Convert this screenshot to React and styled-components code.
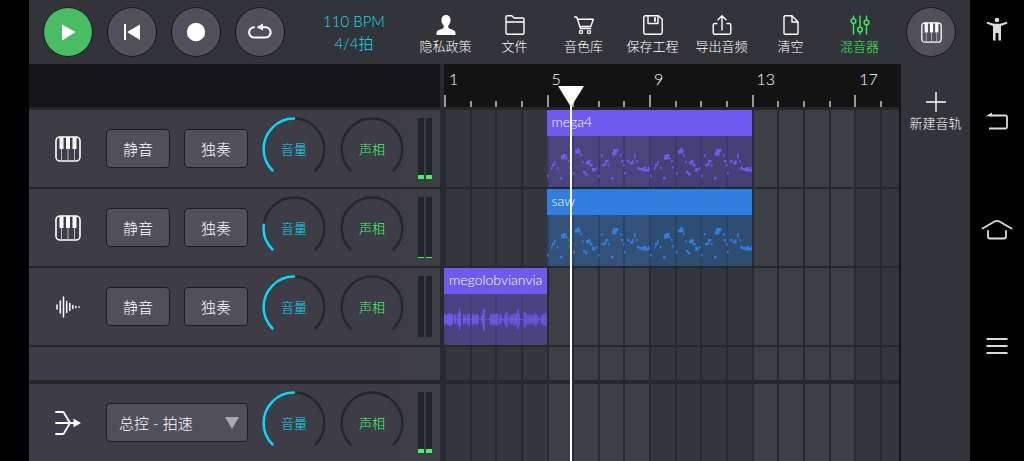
import React from "react";
import styled, { createGlobalStyle } from "styled-components";

const Global = createGlobalStyle`
  * { box-sizing: border-box; }
  body { margin: 0; background: #000; overflow: hidden; }
  button, select, input { font: inherit; color: inherit; }
  svg { display: block; }
`;

const Screen = styled.div`
  display: flex;
  height: 100vh;
  padding-left: 29px;
  background: #000;
  color: #fff;
  font-family: "Century Gothic", Lato, "Noto Sans CJK SC", sans-serif;
  font-weight: 300;
  user-select: none;
`;

const Studio = styled.main`
  flex: 1;
  min-width: 0;
  display: flex;
  flex-direction: column;
  background: #333439;
`;

const Toolbar = styled.header`
  display: flex;
  align-items: center;
  height: 64px;
  flex: none;
  padding: 0 14px;
`;

const Transport = styled.div`
  display: flex;
  gap: 14px;
`;

const RoundButton = styled.button`
  width: 50px;
  height: 50px;
  padding: 0;
  display: grid;
  place-items: center;
  border: 1px solid #17181b;
  border-radius: 50%;
  background: ${(p) => (p.$active ? "#48bd63" : "#504f5a")};
  color: #fff;
`;

const Tempo = styled.div`
  flex: 1;
  padding-left: 12px;
  text-align: center;
  font-size: 15px;
  line-height: 22px;
  color: #12dcf2;
  white-space: nowrap;
`;

const Menu = styled.nav`
  display: flex;
`;

const MenuButton = styled.button`
  width: 69px;
  padding: 5px 0 0;
  border: 0;
  background: none;
  display: flex;
  flex-direction: column;
  align-items: center;
  gap: 3px;
  font-size: 13px;
  line-height: 16px;
  white-space: nowrap;
  color: ${(p) => (p.$active ? "#34f060" : "#fff")};
`;

const InstrumentSlot = styled.div`
  padding-left: 12px;
`;

const Workspace = styled.div`
  flex: 1;
  min-height: 0;
  display: flex;
`;

const Mixer = styled.section`
  width: 411px;
  flex: none;
  display: flex;
  flex-direction: column;
  background: linear-gradient(to right, #3e3d47 90%, #3b3f45);
`;

const MixerHead = styled.div`
  height: 46px;
  flex: none;
  background: #151517;
  border-bottom: 3px solid #25262a;
`;

const TrackRow = styled.div`
  height: 79px;
  flex: none;
  padding: 0 8px 0 26px;
  border-bottom: 2px solid #25262a;
  display: grid;
  grid-template-columns: 37px repeat(4, 64px) 14px;
  column-gap: 14px;
  align-items: center;
`;

const SpacerRow = styled.div`
  height: 37px;
  flex: none;
  border-bottom: 4px solid #25262a;
`;

const TrackButton = styled.button`
  height: 39px;
  padding: 0;
  border: 1px solid #1b1b1f;
  border-radius: 4px;
  background: #504f5a;
  font-size: 15px;
`;

const SelectBox = styled.label`
  grid-column: 2 / 4;
  position: relative;
  color: #a9a9ae;
`;

const TrackSelect = styled.select`
  appearance: none;
  width: 100%;
  height: 39px;
  padding: 0 12px;
  border: 1px solid #1b1b1f;
  border-radius: 4px;
  background: #504f5a;
  font-size: 15px;
  color: #fff;
`;

const SelectArrow = styled.span`
  position: absolute;
  right: 9px;
  top: 14px;
  border: 7px solid transparent;
  border-top: 12px solid #a9a9ae;
  border-bottom: 0;
  pointer-events: none;
`;

const DialLabel = styled.label`
  display: grid;
  place-items: center;
  font-size: 13px;
  color: ${(p) => p.$color};
  > * { grid-area: 1 / 1; }
`;

const DialInput = styled.input`
  width: 100%;
  height: 100%;
  margin: 0;
  opacity: 0;
`;

const Meters = styled.div`
  display: flex;
  gap: 2px;
  height: 61px;
`;

const Meter = styled.div`
  flex: 1;
  display: flex;
  flex-direction: column;
  justify-content: flex-end;
  background: #22252a;
`;

const MeterLevel = styled.div`
  height: ${(p) => p.$level}px;
  background: #43f564;
`;

const Timeline = styled.section`
  flex: 1;
  min-width: 0;
  position: relative;
  display: flex;
  flex-direction: column;
  border-left: 4px solid #272b30;
  border-right: 2px solid #141416;
  background: #272a2e;
`;

const beatGrid = `
  display: grid;
  grid-template-columns: repeat(17, 4fr) 3fr;
`;

const Ruler = styled.div`
  ${beatGrid}
  height: 46px;
  flex: none;
  background: #131313;
  border-bottom: 3px solid #25262a;
`;

const RulerMark = styled.div`
  min-width: 0;
  display: flex;
  flex-direction: column;
  justify-content: space-between;
  font-size: 16px;
  line-height: 18px;
  padding-top: 6px;
  white-space: nowrap;
`;

const MarkLabel = styled.span`
  height: 18px;
  padding-left: 5px;
`;

const Tick = styled.span`
  width: 2px;
  height: ${(p) => (p.$major ? 12 : 6)}px;
  background: #989898;
`;

const Lane = styled.div`
  ${beatGrid}
  height: ${(p) => p.$height}px;
  flex: none;
  border-bottom: ${(p) => p.$gap}px solid #25282c;
`;

const Cell = styled.div`
  grid-row: 1;
  grid-column: ${(p) => p.$n};
  min-width: 0;
  border-left: 2px solid #272b2f;
  background: ${(p) => (p.$light ? "#3c3f46" : "#33373b")};
`;

const Clip = styled.div`
  grid-row: 1;
  grid-column: ${(p) => p.$from} / ${(p) => p.$to};
  min-width: 0;
  z-index: 1;
  display: flex;
  flex-direction: column;
  background: ${(p) => p.$tint};
`;

const ClipTitle = styled.div`
  height: 26px;
  flex: none;
  padding-left: 5px;
  overflow: hidden;
  white-space: nowrap;
  font-size: 14px;
  line-height: 24px;
  color: #fff;
  background: ${(p) => p.$color};
`;

const ClipArt = styled.svg`
  width: 100%;
  flex: 1;
  min-height: 0;
  fill: ${(p) => p.$color};
`;

const Playhead = styled.div`
  position: absolute;
  top: 22px;
  bottom: 0;
  width: 26px;
  margin-left: -13px;
  display: flex;
  flex-direction: column;
  align-items: center;
  z-index: 2;
  pointer-events: none;
`;

const PlayheadTip = styled.div`
  border: 13px solid transparent;
  border-top: 21px solid #fff;
  border-bottom: 0;
`;

const PlayheadLine = styled.div`
  flex: 1;
  width: 2px;
  margin-top: -2px;
  background: #fff;
`;

const SidePanel = styled.aside`
  width: 69px;
  flex: none;
  padding-top: 23px;
`;

const SystemNav = styled.nav`
  width: 54px;
  flex: none;
  display: grid;
  grid-template-rows: 58fr 128fr 88fr 144fr 43fr;
  background: #000;
`;

const SystemButton = styled.button`
  padding: 0;
  border: 0;
  background: none;
  color: #dcdcdc;
  display: grid;
  place-items: center;
`;

function Icon({ size = 20, sw = 1.4, children }) {
  return (
    <svg width={size} height={size} viewBox={`0 0 ${size} ${size}`} fill="none" stroke="currentColor"
      strokeWidth={sw} strokeLinejoin="round" strokeLinecap="round" aria-hidden="true">
      {children}
    </svg>
  );
}

const solid = { fill: "currentColor", stroke: "none" };

function PianoIcon({ size = 26 }) {
  return (
    <svg width={size} height={size} viewBox="0 0 26 26" aria-hidden="true">
      <rect x="1" y="1" width="24" height="24" rx="4" fill="none" stroke="#fff" strokeWidth="1.6" />
      <path d="M4.500 1h4v12h-4zM11 1h4v12h-4zM17.500 1h4v12h-4z" fill="#fff" />
      <path d="M6.500 13v12M13 13v12M19.500 13v12" stroke="#b9b9be" strokeWidth="1" />
    </svg>
  );
}

function WaveIcon() {
  return (
    <Icon size={26} sw={1.5}>
      <path d="M2 11v4M5.300 7v12M8.500 3v20M11.700 7.500v11M14.800 9.500v7M17.800 11.500v3M20.800 12.500v1M24 12.800v.4" />
    </Icon>
  );
}

function MergeIcon() {
  return (
    <Icon size={26} sw={1.9}>
      <path d="M1 2h7.500L15 13 8.500 24H1M1 13h18" />
      <path d="M18.500 8.800 26 13l-7.500 4.200z" {...solid} />
    </Icon>
  );
}

const MENU = [
  ["隐私政策", <path key="a" {...solid} d="M10 0c3 0 4.600 2.100 4.600 5 0 2.400-1 4.300-2.300 5.400v1.700c0 1 .7 1.400 2 1.900 3.300 1.200 5.200 1.800 5.200 4v2H.500v-2c0-2.200 1.900-2.800 5.200-4 1.300-.5 2-.9 2-1.900v-1.700C6.400 9.300 5.400 7.400 5.400 5 5.400 2.100 7 0 10 0z" />],
  ["文件", <path key="a" d="M1 3V2a1.300 1.300 0 0 1 1.300-1.300h4.500L9 3h8.700A1.300 1.300 0 0 1 19 4.300v13.400a1.500 1.500 0 0 1-1.500 1.500h-15A1.500 1.500 0 0 1 1 17.700zM1 7h18" />],
  ["音色库", <g key="a"><path d="M.500 2h2.200l3.800 11.500h10.200M3.500 4.200h15.800l-2.500 7.300H6" /><circle cx="7" cy="17" r="1.600" /><circle cx="15" cy="17" r="1.600" /></g>],
  ["保存工程", <g key="a"><path d="M2.500.800h13l3.700 3.400v13.300a1.700 1.700 0 0 1-1.700 1.700h-15a1.700 1.700 0 0 1-1.700-1.700v-15A1.700 1.700 0 0 1 2.500.800z" /><path d="M5 1v7.500h10V1" /><path d="M12 3v3" strokeWidth="1.800" /></g>],
  ["导出音频", <path key="a" d="M10 15V1M6 4.800 10 .800l4 4M5 8.500H2.700a1.500 1.500 0 0 0-1.500 1.500v7.700a1.500 1.500 0 0 0 1.500 1.500h14.600a1.500 1.500 0 0 0 1.500-1.500V10a1.500 1.500 0 0 0-1.500-1.500H15" />],
  ["清空", <path key="a" d="M3 2a1.200 1.200 0 0 1 1.200-1.200H11L17 7v11a1.200 1.200 0 0 1-1.200 1.200H4.200A1.200 1.200 0 0 1 3 18zM11 .800V7h6" />],
  ["混音器", <g key="a"><circle cx="3.500" cy="6" r="2.400" /><circle cx="10" cy="14.500" r="2.400" /><circle cx="16.500" cy="7.500" r="2.400" /><path d="M3.500 1v2.600M3.500 8.400V19M10 1v11M10 17v2M16.500 1v4M16.500 10v9" /></g>],
];

const TRACKS = [
  { icon: <PianoIcon />, volume: 50, level: 4 },
  { icon: <PianoIcon />, volume: 19, level: 1 },
  { icon: <WaveIcon />, volume: 50, level: 0 },
];

const NOTES = [
  [0, 39], [4, 31], [5, 28, 2], [7, 25, 1, 3], [10, 31], [13, 41, 2], [14, 19, 4, 4], [16, 18, 3, 2], [19, 21], [21, 24], [22, 30],
  [26, 36], [28, 14, 5, 3], [30, 12, 2, 2], [33, 18], [35, 25], [39, 25, 4, 3], [41, 24, 2, 2], [43, 28, 2], [36, 35, 2], [38, 37, 2], [45, 32, 3, 3], [49, 31], [51, 39],
  [54, 18], [55, 28, 2], [57, 27, 2], [58, 24, 3, 2], [61, 28], [64, 41, 2], [65, 16, 4, 3], [66, 13, 4, 3], [70, 13], [73, 18], [74, 24, 2], [76, 28], [77, 36],
  [80, 24, 2], [83, 26, 3], [85, 24], [87, 18, 1, 4], [89, 24], [90, 31, 2], [92, 32, 4], [95, 33, 7], [96, 31, 3], [101, 31, 1, 3],
];

const WAVE = [
  5, 6, 4, 5, 6, 6, 5, 6, 5, 1, 5, 4, 1, 5, 6, 11, 7, 1, 1, 5, 4, 5, 1, 5, 5, 6,
  1, 1, 5, 6, 4, 5, 5, 5, 4, 1, 1, 3, 5, 10, 11, 1, 1, 1, 1, 1, 5, 6, 4, 6, 6, 5, 6, 6,
  1, 5, 5, 4, 1, 1, 4, 6, 8, 7, 1, 3, 4, 5, 5, 3, 6, 5, 6, 9, 10, 6, 1, 1, 1, 1, 8, 7,
  6, 4, 5, 3, 5, 5, 3, 5, 4, 7, 6, 4, 3, 1, 1, 4, 5, 5, 6, 6, 7,
];

function Notes({ color }) {
  return (
    <ClipArt $color={color} viewBox="0 0 205 51" preserveAspectRatio="none" aria-hidden="true">
      {[0, 103].flatMap((shift) =>
        NOTES.map(([x, y, w = 1, h = 2], i) => (
          <rect key={`${shift}-${i}`} x={x + shift} y={y} width={w + 0.5} height={h + 0.5} />
        ))
      )}
    </ClipArt>
  );
}

function Wave({ color }) {
  return (
    <ClipArt $color={color} viewBox="0 0 103 51" preserveAspectRatio="none" aria-hidden="true">
      <rect x="0" y="25" width="103" height="1" opacity="0.7" />
      {WAVE.map((a, i) => (a > 1 ? <rect key={i} x={i} y={25.5 - a} width="1" height={a * 2} /> : null))}
    </ClipArt>
  );
}

const ARC = "M10.500 53.500A30.400 30.400 0 1 1 53.500 53.500";

function Dial({ label, color, value, filled }) {
  return (
    <DialLabel $color={color}>
      <svg width="64" height="64" viewBox="0 0 64 64" fill="none" strokeWidth="2.500" strokeLinecap="round" aria-hidden="true">
        <path d={ARC} stroke="#26272b" />
        {filled && <path d={ARC} stroke="#06dcf8" pathLength="100" strokeDasharray={`${value} 200`} />}
      </svg>
      <span>{label}</span>
      <DialInput type="range" min="0" max="100" defaultValue={value} />
    </DialLabel>
  );
}

function Controls({ volume, level }) {
  return (
    <>
      <Dial label="音量" color="#0cd8f0" value={volume} filled />
      <Dial label="声相" color="#3cfa62" value={50} />
      <Meters>
        <Meter><MeterLevel $level={level} /></Meter>
        <Meter><MeterLevel $level={level} /></Meter>
      </Meters>
    </>
  );
}

const BARS = Array.from({ length: 18 }, (_, i) => i);

function TimelineLane({ height = 79, gap = 2, children }) {
  return (
    <Lane $height={height} $gap={gap}>
      {BARS.map((i) => (
        <Cell key={i} $n={i + 1} $light={Math.floor(i / 4) % 2 === 1} />
      ))}
      {children}
    </Lane>
  );
}

export default function App() {
  const playhead = 127 / 455;
  return (
    <Screen>
      <Global />
      <Studio>
        <Toolbar>
          <Transport>
            <RoundButton $active aria-label="播放">
              <Icon size={20}><path {...solid} d="M4 2.500 17.500 10 4 18.500z" /></Icon>
            </RoundButton>
            <RoundButton aria-label="回到开头">
              <Icon size={20}><path {...solid} d="M2 2h2v16H2zM18 2.500v15.500L5 10z" /></Icon>
            </RoundButton>
            <RoundButton aria-label="录音">
              <Icon size={20}><circle {...solid} cx="10" cy="10" r="9.200" /></Icon>
            </RoundButton>
            <RoundButton aria-label="循环">
              <Icon size={24} sw={2}>
                <path d="M6 7.200A5 5 0 0 0 6.500 17.500h11a5 5 0 0 0 0-10.300H13" />
                <path {...solid} d="M8.500 7.200 15 3.500v7z" />
              </Icon>
            </RoundButton>
          </Transport>
          <Tempo>
            110 BPM
            <br />
            4/4拍
          </Tempo>
          <Menu>
            {MENU.map(([label, art], i) => (
              <MenuButton key={label} $active={i === 6}>
                <Icon>{art}</Icon>
                {label}
              </MenuButton>
            ))}
          </Menu>
          <InstrumentSlot>
            <RoundButton aria-label="乐器"><PianoIcon size={21} /></RoundButton>
          </InstrumentSlot>
        </Toolbar>
        <Workspace>
          <Mixer>
            <MixerHead />
            {TRACKS.map((t, i) => (
              <TrackRow key={i}>
                {t.icon}
                <TrackButton>静音</TrackButton>
                <TrackButton>独奏</TrackButton>
                <Controls volume={t.volume} level={t.level} />
              </TrackRow>
            ))}
            <SpacerRow />
            <TrackRow>
              <MergeIcon />
              <SelectBox>
                <TrackSelect aria-label="总控">
                  <option>总控 - 拍速</option>
                </TrackSelect>
                <SelectArrow />
              </SelectBox>
              <Controls volume={50} level={4} />
            </TrackRow>
          </Mixer>
          <Timeline>
            <Ruler>
              {BARS.map((i) => (
                <RulerMark key={i}>
                  <MarkLabel>{i % 4 === 0 ? i + 1 : ""}</MarkLabel>
                  <Tick $major={i % 4 === 0} />
                </RulerMark>
              ))}
            </Ruler>
            <TimelineLane>
              <Clip $from={5} $to={13} $tint="rgba(98, 80, 210, 0.4)">
                <ClipTitle $color="#6c5bee">mega4</ClipTitle>
                <Notes color="#6c5bee" />
              </Clip>
            </TimelineLane>
            <TimelineLane>
              <Clip $from={5} $to={13} $tint="rgba(40, 110, 200, 0.4)">
                <ClipTitle $color="#307ee0">saw</ClipTitle>
                <Notes color="#307ee0" />
              </Clip>
            </TimelineLane>
            <TimelineLane>
              <Clip $from={1} $to={5} $tint="rgba(98, 80, 200, 0.5)">
                <ClipTitle $color="#6c5bee">megolobvianvia</ClipTitle>
                <Wave color="#6c5bee" />
              </Clip>
            </TimelineLane>
            <TimelineLane height={37} gap={4} />
            <TimelineLane />
            <Playhead style={{ left: `${playhead * 100}%` }}>
              <PlayheadTip />
              <PlayheadLine />
            </Playhead>
          </Timeline>
          <SidePanel>
            <MenuButton>
              <Icon><path d="M10 .500v19M.500 10h19" /></Icon>
              新建音轨
            </MenuButton>
          </SidePanel>
        </Workspace>
      </Studio>
      <SystemNav>
        <SystemButton aria-label="无障碍">
          <Icon size={24}>
            <circle {...solid} cx="12" cy="3" r="2.300" />
            <path {...solid} d="M2 4.800 9 6.800h6l7-2 .4 1.700-6.400 2.500v14.500h-2.600V16h-2.800v7.500H8V9L1.600 6.500z" />
          </Icon>
        </SystemButton>
        <SystemButton aria-label="返回">
          <Icon size={24} sw={1.8}>
            <path strokeLinecap="butt" d="M4 5.500h16.500a1.500 1.500 0 0 1 1.500 1.500v10a1.500 1.500 0 0 1-1.500 1.500H4" />
            <path {...solid} d="M.500 6.300 7 2.500v3.800z" />
          </Icon>
        </SystemButton>
        <SystemButton aria-label="主页">
          <Icon size={32} sw={1.8}>
            <path d="M1.500 14.500 14 7.300q2-1 4 0l12.500 7.200M7 17v5.500a2 2 0 0 0 2 2h14a2 2 0 0 0 2-2V17" />
          </Icon>
        </SystemButton>
        <SystemButton aria-label="最近任务">
          <Icon size={24} sw={1.8}><path strokeLinecap="butt" d="M1.500 5h21M1.500 12h21M1.500 19h21" /></Icon>
        </SystemButton>
      </SystemNav>
    </Screen>
  );
}
